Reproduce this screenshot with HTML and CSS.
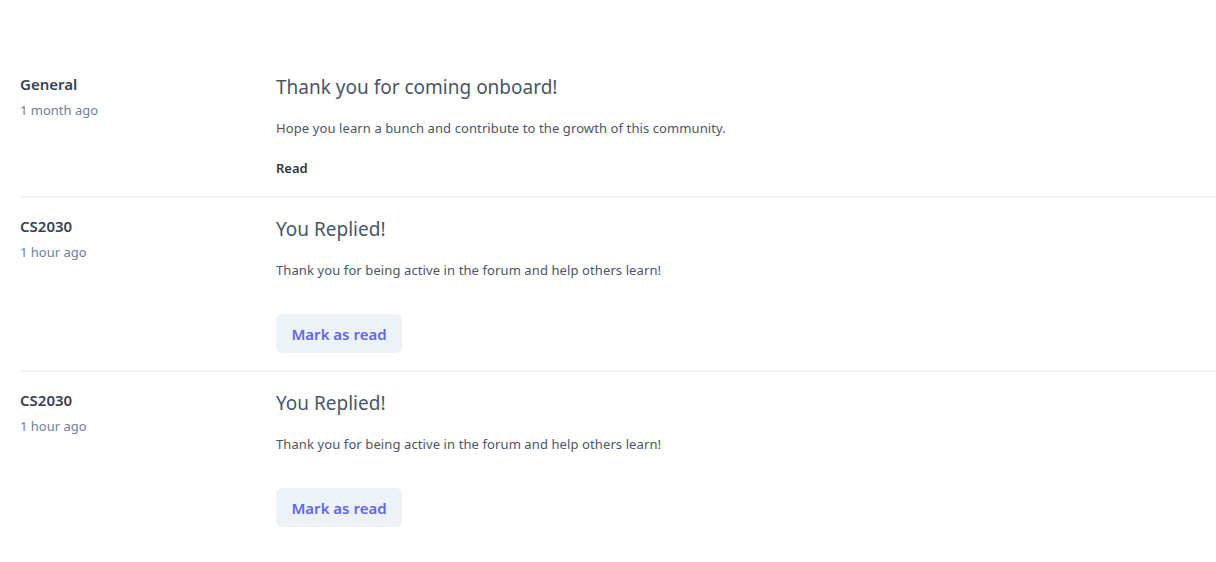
FILE: index.html
```html
<!DOCTYPE html>
<html lang="en">
<head>
<meta charset="utf-8">
<title>Notifications</title>
<link rel="stylesheet" href="styles.css">
</head>
<body>
<main class="list">
  <section class="item">
    <div class="meta">
      <div class="course">General</div>
      <div class="time">1 month ago</div>
    </div>
    <div class="content">
      <h2 class="title">Thank you for coming onboard!</h2>
      <p class="text">Hope you learn a bunch and contribute to the growth of this community.</p>
      <div class="status">Read</div>
    </div>
  </section>
  <section class="item">
    <div class="meta">
      <div class="course">CS2030</div>
      <div class="time">1 hour ago</div>
    </div>
    <div class="content">
      <h2 class="title">You Replied!</h2>
      <p class="text">Thank you for being active in the forum and help others learn!</p>
      <button class="mark">Mark as read</button>
    </div>
  </section>
  <section class="item">
    <div class="meta">
      <div class="course">CS2030</div>
      <div class="time">1 hour ago</div>
    </div>
    <div class="content">
      <h2 class="title">You Replied!</h2>
      <p class="text">Thank you for being active in the forum and help others learn!</p>
      <button class="mark">Mark as read</button>
    </div>
  </section>
</main>
</body>
</html>
```

FILE: styles.css
```css
* { box-sizing: border-box; }
html, body { margin: 0; padding: 0; background: #fff; }
body {
  font-family: "Noto Sans", "Open Sans", sans-serif;
  color: #374151;
  overflow: hidden;
}
.list {
  padding: 56px 0 0 20px;
}
.item {
  display: flex;
  padding: 16px 0 18px 0;
  border-bottom: 2px solid #f3f3f3;
}
.item:last-child { border-bottom: none; }
.meta {
  width: 256px;
  flex: none;
}
.course {
  font-size: 15px;
  font-weight: 600;
  line-height: 24px;
  color: #374151;
}
.time {
  font-size: 13px;
  line-height: 20px;
  color: #718096;
  margin-top: 4px;
}
.content { flex: 1; }
.title {
  margin: 0;
  font-size: 19px;
  font-weight: 400;
  line-height: 30px;
  color: #4a5568;
}
.text {
  margin: 16px 0 0;
  font-size: 13px;
  letter-spacing: 0.1px;
  line-height: 20px;
  color: #4a5568;
}
.status {
  margin-top: 20px;
  font-size: 13px;
  font-weight: 600;
  line-height: 20px;
  color: #2d3748;
}
.mark {
  display: block;
  margin: 34px 0 -1px;
  height: 39px;
  width: 126px;
  padding: 0;
  border: none;
  border-radius: 6px;
  background: #edf2f7;
  color: #6366f1;
  font-family: inherit;
  font-size: 15px;
  font-weight: 600;
  cursor: pointer;
}
```
